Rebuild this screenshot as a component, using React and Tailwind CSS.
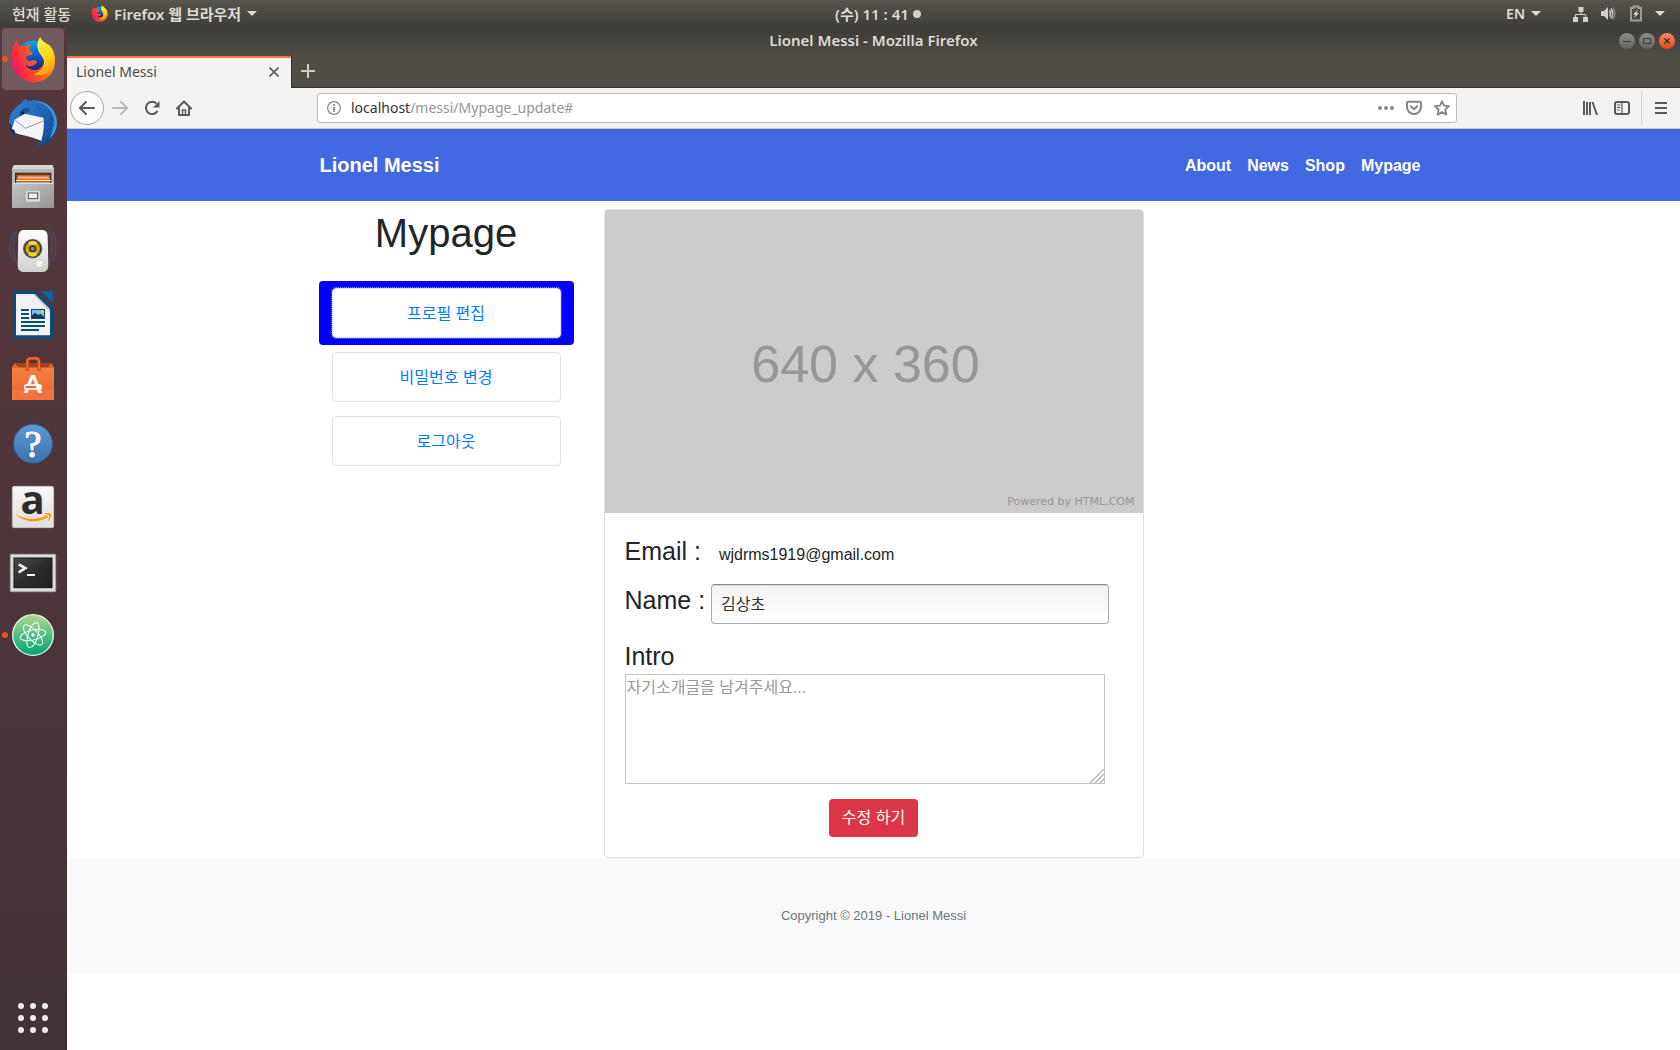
import React from "react";

const UI = "font-['Noto_Sans','Noto_Sans_CJK_KR',sans-serif]";
const WEB = "font-['Liberation_Sans','Noto_Sans_CJK_KR',sans-serif]";

function FirefoxLogo({ id, className }) {
  return (
    <svg viewBox="30 30 138 140" className={className} aria-hidden="true">
      <defs>
        <linearGradient id={id + "b"} x1="0" y1="0" x2="0.2" y2="1">
          <stop offset="0" stopColor="#00b3f5" />
          <stop offset="0.5" stopColor="#0a62d8" />
          <stop offset="1" stopColor="#2a1c78" />
        </linearGradient>
        <linearGradient id={id + "f"} x1="0" y1="0.7" x2="1" y2="0.3">
          <stop offset="0" stopColor="#e3127c" />
          <stop offset="0.22" stopColor="#ff2b3f" />
          <stop offset="0.6" stopColor="#ff6a1a" />
          <stop offset="1" stopColor="#ffb413" />
        </linearGradient>
        <linearGradient id={id + "y"} x1="0.2" y1="0" x2="0.6" y2="1">
          <stop offset="0" stopColor="#fff44a" />
          <stop offset="0.55" stopColor="#ffd91f" />
          <stop offset="1" stopColor="#ff9a12" />
        </linearGradient>
      </defs>
      <circle cx="99" cy="93" r="49" fill={"url(#" + id + "b)"} />
      <path
        d="M50 38C46 48 44 56 38 68C29 90 32 114 43 134C57 158 80 168 102 168C138 168 166 140 165 104C165 84 158 66 146 56L124 80C134 96 134 108 128 118C120 132 102 136 88 128C82 125 78 121 76 116C86 122 96 121 103 116C110 112 112 108 108 104C100 98 92 108 82 102C74 97 78 88 86 88C94 88 100 82 98 79C92 76 86 72 86 68L95 54C84 54 76 58 72 62C64 56 58 56 54 58Z"
        fill={"url(#" + id + "f)"}
      />
      <path
        d="M121 33C109 46 110 66 118 80C130 96 136 106 130 122C124 134 112 142 100 144C124 152 152 140 161 120C170 94 160 68 146 56C138 50 124 44 121 33Z"
        fill={"url(#" + id + "y)"}
      />
    </svg>
  );
}

function Thunderbird() {
  return (
    <svg viewBox="6 201 186 186" className="size-full" aria-hidden="true">
      <defs>
        <linearGradient id="tb" x1="0" y1="0" x2="1" y2="1">
          <stop offset="0" stopColor="#2f86d6" />
          <stop offset="0.5" stopColor="#1f66b8" />
          <stop offset="1" stopColor="#123a78" />
        </linearGradient>
      </defs>
      <path d="M84 222C72 224 64 230 62 236C40 248 26 274 27 296C28 306 34 318 38 322L46 334L50 324L124 344C120 352 112 358 100 363C116 364 130 360 138 354C146 354 152 348 154 342C166 330 172 312 171 292C170 258 144 228 104 226C96 226 88 228 80 230Z" fill="url(#tb)" />
      <path d="M104 228C136 234 158 256 162 284C160 304 156 320 150 340C162 330 172 310 171 292C170 258 144 228 104 228Z" fill="#3f98da" />
      <path d="M110 240L132 262L126 284L148 268L138 300L160 286M136 312L164 300M134 328L158 316" fill="none" stroke="#1a62b0" strokeWidth="5" />
      <path d="M44 284L74 266L130 278C134 300 130 326 124 347L92 336L52 326L34 314C38 304 42 294 44 284Z" fill="#f5f5f7" />
      <path d="M44 284L76 310L130 288" fill="none" stroke="#98989c" strokeWidth="3" />
      <path d="M27 294L34 300L36 312L44 316L46 334C34 324 28 312 27 294Z" fill="#162f6e" />
      <path d="M58 268C60 250 78 246 92 252C86 262 74 268 58 272Z" fill="#1c4f95" />
      <circle cx="68" cy="264" r="4" fill="#181818" />
    </svg>
  );
}

function Files() {
  return (
    <svg viewBox="6 393 186 186" className="size-full" aria-hidden="true">
      <defs>
        <linearGradient id="fl" x1="0" y1="0" x2="1" y2="1">
          <stop offset="0" stopColor="#c4c4c4" />
          <stop offset="1" stopColor="#959595" />
        </linearGradient>
      </defs>
      <path d="M42 420H157L162 432V548H36V432Z" fill="#b9b9b9" />
      <path d="M42 420H157L162 432H36Z" fill="#d6d6d6" />
      <rect x="45" y="443" width="109" height="34" fill="#38322e" />
      <rect x="50" y="449" width="100" height="24" fill="#d2581a" />
      <rect x="54" y="455" width="92" height="3" fill="#fff0d8" />
      <rect x="50" y="459" width="100" height="5" fill="#f08a35" />
      <rect x="48" y="465" width="104" height="3" fill="#fff3e2" />
      <path d="M36 474H48V472H150V474H162V549H36Z" fill="url(#fl)" />
      <path d="M38 475H160" stroke="#e4e4e4" strokeWidth="3" />
      <rect x="78" y="498" width="42" height="32" rx="4" fill="#dadada" />
      <rect x="85" y="504" width="28" height="17" fill="#eeeeee" stroke="#555" strokeWidth="3" />
    </svg>
  );
}

function Rhythmbox() {
  return (
    <svg viewBox="6 585 186 186" className="size-full" aria-hidden="true">
      <defs>
        <linearGradient id="rb" x1="0" y1="0" x2="0" y2="1">
          <stop offset="0" stopColor="#ffffff" />
          <stop offset="1" stopColor="#cfd0ce" />
        </linearGradient>
      </defs>
      <g fill="none" stroke="#4a5f92" strokeWidth="5" opacity="0.45">
        <path d="M50 618C38 640 38 690 50 716M40 622C26 644 26 688 40 710" />
        <path d="M147 618C159 640 159 690 147 716M157 622C171 644 171 688 157 710" />
      </g>
      <path d="M72 615H126Q142 615 143 632L145 722Q144 741 126 741H72Q54 741 53 722L55 632Q57 615 72 615Z" fill="url(#rb)" />
      <circle cx="98" cy="671" r="29" fill="#555753" />
      <circle cx="98" cy="671" r="25" fill="#2e3030" />
      <circle cx="98" cy="671" r="22" fill="#c9a812" />
      <path d="M98 671L84 652A24 24 0 0 1 112 652ZM98 671L84 690A24 24 0 0 0 112 690Z" fill="#ecd33f" />
      <circle cx="98" cy="671" r="11" fill="#39382e" />
      <circle cx="98" cy="671" r="6" fill="#8a8a84" />
      <circle cx="118" cy="716" r="11" fill="#fafafa" stroke="#c0c0be" strokeWidth="2" />
      <circle cx="76" cy="719" r="6" fill="none" stroke="#d4d4d2" strokeWidth="2" />
    </svg>
  );
}

function Writer() {
  return (
    <svg viewBox="6 12 186 186" className="size-full" aria-hidden="true">
      <path d="M46 33H108L159 84V170Q159 177 152 177H46Q39 177 39 170V40Q39 33 46 33Z" fill="#0b4c77" />
      <path d="M48 42H104L150 88V166H48Z" fill="#f2f2f2" />
      <path d="M104 42L150 88V96L100 44Z" fill="#c9c9c9" />
      <path d="M122 33H154Q159 33 159 38V70Z" fill="#0b639c" />
      <path d="M63 90H87M63 102H87M63 114H87M63 126H135M63 138H135M63 150H117" stroke="#0b4c77" strokeWidth="6" />
      <rect x="93" y="87" width="42" height="30" fill="#0b4c77" />
      <rect x="96" y="90" width="36" height="24" fill="#79c4e4" />
      <path d="M96 114V106L106 98L114 105L121 101L132 110V114Z" fill="#173a52" />
      <circle cx="127" cy="95" r="4" fill="#f5cf3a" />
    </svg>
  );
}

function Software() {
  return (
    <svg viewBox="6 204 186 186" className="size-full" aria-hidden="true">
      <defs>
        <linearGradient id="sw" x1="0" y1="0" x2="0" y2="1">
          <stop offset="0" stopColor="#f58146" />
          <stop offset="1" stopColor="#e8622a" />
        </linearGradient>
      </defs>
      <path d="M44 249H154L162 262H36Z" fill="#a8401a" />
      <path d="M44 249L54 262H36ZM154 249L144 262H162Z" fill="#e4622f" />
      <rect x="36" y="262" width="126" height="98" fill="url(#sw)" />
      <rect x="36" y="330" width="126" height="30" fill="#f37b45" opacity="0.7" />
      <path d="M82 272V246Q82 235 93 235H106Q117 235 117 246V272" fill="none" stroke="#b5451b" strokeWidth="10" />
      <path d="M82 270V246Q82 235 93 235H106Q117 235 117 246V270" fill="none" stroke="#ec6a36" strokeWidth="6" />
      <text x="99" y="339" textAnchor="middle" fontSize="77" fontWeight="700" fill="#fff" fontFamily="Lato, sans-serif">A</text>
      <rect x="72" y="313" width="54" height="16" rx="6" fill="#fff" />
      <rect x="76" y="318" width="32" height="6" fill="#e8622a" />
    </svg>
  );
}

function Help() {
  return (
    <svg viewBox="6 396 186 186" className="size-full overflow-visible" aria-hidden="true">
      <defs>
        <linearGradient id="hp" x1="0" y1="0" x2="0" y2="1">
          <stop offset="0" stopColor="#5d9ad2" />
          <stop offset="1" stopColor="#3b72ae" />
        </linearGradient>
      </defs>
      <circle cx="99" cy="494" r="60" fill="#2e3d58" opacity="0.6" />
      <circle cx="99" cy="491" r="58" fill="url(#hp)" stroke="#37659b" strokeWidth="3" />
      <text x="99" y="532" textAnchor="middle" fontSize="114" fill="#fff" stroke="#fff" strokeWidth="3" fontFamily="Liberation Serif, serif">?</text>
    </svg>
  );
}

function Amazon() {
  return (
    <svg viewBox="6 588 186 186" className="size-full overflow-visible" aria-hidden="true">
      <defs>
        <linearGradient id="az" x1="0" y1="0" x2="0" y2="1">
          <stop offset="0" stopColor="#f8f8f8" />
          <stop offset="1" stopColor="#dedede" />
        </linearGradient>
      </defs>
      <rect x="37" y="619" width="124" height="124" rx="5" fill="url(#az)" stroke="#c9c9c9" strokeWidth="2" />
      <text x="98" y="703" textAnchor="middle" fontSize="120" fontWeight="700" fill="#2c2c2c" fontFamily="Open Sans, sans-serif">a</text>
      <path d="M45 701C76 722 116 720 141 706L145 711C116 730 72 729 45 701Z" fill="#f90" />
      <path d="M131 702C140 698 150 698 153 701C154 708 150 718 145 724C144 718 149 710 147 706C142 703 136 704 131 702Z" fill="#f90" />
    </svg>
  );
}

function TerminalIcon() {
  return (
    <svg viewBox="6 15 186 186" className="size-full" aria-hidden="true">
      <defs>
        <linearGradient id="tm" x1="0" y1="0" x2="1" y2="1">
          <stop offset="0" stopColor="#4b4b4b" />
          <stop offset="0.5" stopColor="#2c2c2c" />
          <stop offset="1" stopColor="#202020" />
        </linearGradient>
      </defs>
      <rect x="31" y="58" width="136" height="112" rx="3" fill="#dcdcdc" stroke="#a9a9a9" strokeWidth="3" />
      <rect x="42" y="69" width="114" height="89" fill="url(#tm)" stroke="#151515" strokeWidth="3" />
      <path d="M56 88L76 99L56 112" fill="none" stroke="#f2f2f2" strokeWidth="8" />
      <path d="M81 120H105" stroke="#f2f2f2" strokeWidth="6" />
    </svg>
  );
}

function Atom() {
  return (
    <svg viewBox="6 207 186 186" className="size-full" aria-hidden="true">
      <defs>
        <linearGradient id="at" x1="0" y1="0" x2="0" y2="1">
          <stop offset="0" stopColor="#b2dc92" />
          <stop offset="0.5" stopColor="#52bd85" />
          <stop offset="1" stopColor="#00a471" />
        </linearGradient>
      </defs>
      <circle cx="99" cy="300" r="61" fill="url(#at)" stroke="#eaf6ee" strokeWidth="4" />
      <g fill="none" stroke="#fff" strokeWidth="3">
        <ellipse cx="99" cy="300" rx="39" ry="15" transform="rotate(-13 99 300)" />
        <ellipse cx="99" cy="300" rx="39" ry="15" transform="rotate(47 99 300)" />
        <ellipse cx="99" cy="300" rx="39" ry="15" transform="rotate(107 99 300)" />
      </g>
      <circle cx="99" cy="300" r="5" fill="#fff" />
    </svg>
  );
}

const dockApps = [
  { name: "Firefox", icon: <FirefoxLogo id="dock" className="h-[47px] w-[46px]" />, active: true, running: true },
  { name: "Thunderbird", icon: <Thunderbird /> },
  { name: "Files", icon: <Files /> },
  { name: "Rhythmbox", icon: <Rhythmbox /> },
  { name: "LibreOffice Writer", icon: <Writer /> },
  { name: "Ubuntu Software", icon: <Software /> },
  { name: "Help", icon: <Help /> },
  { name: "Amazon", icon: <Amazon /> },
  { name: "Terminal", icon: <TerminalIcon /> },
  { name: "Atom", icon: <Atom />, running: true },
];

function Caret() {
  return (
    <svg viewBox="0 0 10 6" className="h-[6px] w-[10px]" fill="currentColor" aria-hidden="true">
      <path d="M0 0H10L5 5Z" />
    </svg>
  );
}

function TopBar() {
  return (
    <header className={"grid h-[27px] shrink-0 grid-cols-[11fr_auto_10fr] items-center bg-linear-to-b from-[#58554e] to-[#3e3d39] text-[15px] leading-5 font-semibold text-[#dfdbd2] " + UI}>
      <div className="flex items-center pl-3">
        <button type="button" className="mr-5 whitespace-nowrap font-medium">현재 활동</button>
        <button type="button" className="flex items-center gap-1.5 whitespace-nowrap">
          <FirefoxLogo id="bar" className="size-[17px]" />
          <span>Firefox 웹 브라우저</span>
          <Caret />
        </button>
      </div>
      <button type="button" className="flex items-center gap-1 whitespace-nowrap">
        <span>(수) 11 : 41</span>
        <span className="size-2 rounded-full bg-[#d3d0ca]" />
      </button>
      <div className="flex items-center justify-end pr-[15px]">
        <button type="button" className="mr-8 flex items-center gap-1.5 text-sm">EN <Caret /></button>
        <button type="button" aria-label="System menu" className="flex items-center gap-3">
          <svg viewBox="0 0 16 16" className="size-4" aria-hidden="true">
            <path d="M5.500 1H10.500V6H5.500ZM0 11H5V16H0ZM10 11H15V16H10Z" fill="#d3d0ca" />
            <path d="M8 6V8.500M2.500 11V8.500H12.500V11" fill="none" stroke="#d3d0ca" />
          </svg>
          <svg viewBox="0 0 16 16" className="size-4" aria-hidden="true">
            <path d="M0 5H3L7 1V14L3 10H0Z" fill="#d3d0ca" />
            <path d="M8.500 4.500Q10.500 7.500 8.500 10.500M10 2.500Q13.500 7.500 10 12.500" fill="none" stroke="#d3d0ca" strokeWidth="1.500" />
            <path d="M12 1.500Q16 7.500 12 13.500" fill="none" stroke="#84817a" strokeWidth="1.500" />
          </svg>
          <svg viewBox="0 0 14 17" className="h-[17px] w-[14px]" aria-hidden="true">
            <path d="M4.500 1.500H9.500V3H12V15.500H2V3H4.500Z" fill="none" stroke="#a09d96" strokeWidth="2" />
            <path d="M9 4.500L4 9.500H6.500L5 13L10 8H7.500Z" fill="#e8e5df" />
          </svg>
          <Caret />
        </button>
      </div>
    </header>
  );
}

function Dock() {
  return (
    <aside className="flex w-[67px] shrink-0 flex-col items-center bg-linear-to-b from-[#54373b] via-[#4d353a] to-[#403236] pt-px">
      <nav aria-label="Dock" className="flex w-full flex-col gap-0.5">
        {dockApps.map((app) => (
          <div key={app.name} className="relative pl-0.5">
            <button
              type="button"
              aria-label={app.name}
              className={app.active ? "flex size-[62px] items-center justify-center rounded-sm bg-[#715a5e]" : "flex size-[62px] items-center justify-center"}
            >
              {app.icon}
            </button>
            {app.running && <span className="absolute top-7 left-0.5 size-1.5 rounded-full bg-[#e95420]" />}
          </div>
        ))}
      </nav>
      <button type="button" aria-label="Show applications" className="mt-auto mr-px mb-[17px] grid grid-cols-3 gap-1.5">
        {Array.from({ length: 9 }, (_, i) => (
          <span key={i} className="size-1.5 rounded-full bg-[#eeeeec]" />
        ))}
      </button>
    </aside>
  );
}

function TitleBar() {
  return (
    <div className="grid h-7 grid-cols-[1fr_auto_1fr] items-center bg-linear-to-b from-[#3b3a36] to-[#504d46] text-[#dfdbd2]">
      <span />
      <h1 className="pb-0.5 text-[15px] leading-5 font-semibold">Lionel Messi - Mozilla Firefox</h1>
      <div className="flex justify-end gap-1 pr-[5px]">
        <button type="button" aria-label="Minimize" className="flex size-4 items-center justify-center rounded-full bg-linear-to-b from-[#8e8c86] to-[#65635d]">
          <span className="h-px w-2 bg-[#3c3b37]" />
        </button>
        <button type="button" aria-label="Maximize" className="flex size-4 items-center justify-center rounded-full bg-linear-to-b from-[#8e8c86] to-[#65635d]">
          <span className="h-1.5 w-2 border border-[#3c3b37]" />
        </button>
        <button type="button" aria-label="Close" className="flex size-4 items-center justify-center rounded-full bg-linear-to-b from-[#f58660] to-[#df4a16]">
          <svg viewBox="0 0 6 6" className="size-1.5" aria-hidden="true">
            <path d="M0.500 0.500L5.500 5.500M5.500 0.500L0.500 5.500" stroke="#3c2a20" strokeWidth="1.300" />
          </svg>
        </button>
      </div>
    </div>
  );
}

function TabStrip() {
  return (
    <div className="flex h-[33px] items-stretch bg-[#504d46]">
      <div className="mt-px flex w-56 items-center border-t-2 border-[#f07746] bg-[#f4f3f2] pr-2.5 pb-0.5 pl-[9px]">
        <button type="button" className="flex-1 text-left text-sm leading-5 text-[#4c4c4c]">Lionel Messi</button>
        <button type="button" aria-label="Close tab" className="p-0.5">
          <svg viewBox="0 0 10 10" className="size-2.5" aria-hidden="true">
            <path d="M0.500 0.500L9.500 9.500M9.500 0.500L0.500 9.500" stroke="#5c5c5c" strokeWidth="1.700" />
          </svg>
        </button>
      </div>
      <div className="flex flex-1 items-center border-b border-l border-[#33322e] pl-[9px]">
        <button type="button" aria-label="New tab">
          <svg viewBox="0 0 14 14" className="size-3.5" aria-hidden="true">
            <path d="M7 0V14M0 7H14" stroke="#d0cdc6" strokeWidth="2" />
          </svg>
        </button>
      </div>
    </div>
  );
}

function ToolButton({ label, children, className = "" }) {
  return (
    <button type="button" aria-label={label} className={"flex size-8 items-center justify-center " + className}>
      {children}
    </button>
  );
}

function Toolbar() {
  return (
    <div className="flex h-[41px] items-center border-b border-[#c8c4bd] bg-[#f4f3f2] text-[#5a5a5a]">
      <button type="button" aria-label="Back" className="ml-[3px] flex size-[34px] items-center justify-center rounded-full border border-[#a8a7a5] bg-[#fcfcfc]">
        <svg viewBox="0 0 16 16" className="size-4" fill="none" stroke="currentColor" strokeWidth="2" strokeLinecap="round" strokeLinejoin="round" aria-hidden="true">
          <path d="M7 2L1 8L7 14M1.500 8H15" />
        </svg>
      </button>
      <ToolButton label="Forward" className="text-[#b9b8b6]">
        <svg viewBox="0 0 16 16" className="size-4" fill="none" stroke="currentColor" strokeWidth="2" strokeLinecap="round" strokeLinejoin="round" aria-hidden="true">
          <path d="M9 2L15 8L9 14M14.500 8H1" />
        </svg>
      </ToolButton>
      <ToolButton label="Reload">
        <svg viewBox="0 0 16 16" className="size-4" fill="none" stroke="currentColor" strokeWidth="2" aria-hidden="true">
          <path d="M13.500 11A6.200 6.200 0 1 1 12.500 3.500" />
          <path d="M15.500 1V7.500H9Z" fill="currentColor" stroke="none" />
        </svg>
      </ToolButton>
      <ToolButton label="Home">
        <svg viewBox="0 0 16 16" className="size-4" fill="none" stroke="currentColor" strokeWidth="2" strokeLinecap="round" strokeLinejoin="round" aria-hidden="true">
          <path d="M1 8.500L8 1.500L15 8.500M3 8V15H13V8" />
          <path d="M6.500 15V10H9.500V15" strokeWidth="1.500" />
        </svg>
      </ToolButton>
      <div className="w-[117px] shrink" />
      <div className="flex h-[30px] min-w-0 flex-1 items-center rounded-[3px] border border-[#bcb9b5] bg-white pr-1.5 text-[#858585]">
        <button type="button" aria-label="Site information" className="pr-2.5 pl-[9px]">
          <svg viewBox="0 0 14 14" className="size-3.5" fill="none" stroke="currentColor" aria-hidden="true">
            <circle cx="7" cy="7" r="6.400" strokeWidth="1.200" />
            <path d="M7 6V11M7 3V5" strokeWidth="1.700" />
          </svg>
        </button>
        <div className="relative min-w-0 flex-1 text-sm leading-5">
          <input aria-label="Address" defaultValue="localhost/messi/Mypage_update#" className="w-full bg-transparent text-transparent caret-black outline-none" />
          <span aria-hidden="true" className="pointer-events-none absolute inset-0 text-[#969696]">
            <span className="text-[#333]">localhost</span>/messi/Mypage_update#
          </span>
        </div>
        <div className="flex items-center gap-3">
          <button type="button" aria-label="Page actions">
            <svg viewBox="0 0 16 16" className="size-4" fill="currentColor" aria-hidden="true">
              <circle cx="2" cy="8" r="2" />
              <circle cx="8" cy="8" r="2" />
              <circle cx="14" cy="8" r="2" />
            </svg>
          </button>
          <button type="button" aria-label="Save to Pocket">
            <svg viewBox="0 0 16 16" className="size-4" fill="none" stroke="currentColor" strokeWidth="2" strokeLinecap="round" strokeLinejoin="round" aria-hidden="true">
              <path d="M2 1.800H14Q15 1.800 15 2.800V7A7 7 0 0 1 1 7V2.800Q1 1.800 2 1.800Z" />
              <path d="M4.800 6.200L8 9.300L11.200 6.200" />
            </svg>
          </button>
          <button type="button" aria-label="Bookmark">
            <svg viewBox="0 0 16 16" className="size-4" fill="none" stroke="currentColor" strokeWidth="1.800" strokeLinejoin="round" aria-hidden="true">
              <path d="M8 1.200L10 5.700L15 6.200L11.300 9.500L12.400 14.700L8 12L3.600 14.700L4.700 9.500L1 6.200L6 5.700Z" />
            </svg>
          </button>
        </div>
      </div>
      <div className="w-[117px] shrink" />
      <ToolButton label="Library">
        <svg viewBox="0 0 16 16" className="size-4" fill="none" stroke="currentColor" strokeWidth="2" aria-hidden="true">
          <path d="M2 1V15M5 2V15M8 2V15M10.500 2L15 15" />
        </svg>
      </ToolButton>
      <ToolButton label="Sidebars">
        <svg viewBox="0 0 16 16" className="size-4" fill="none" stroke="currentColor" aria-hidden="true">
          <rect x="1" y="2" width="14" height="12" rx="2" strokeWidth="2" />
          <path d="M8 2V14M3 5H6.500M3 7.500H6.500M3 10H5.500" strokeWidth="1.200" />
        </svg>
      </ToolButton>
      <span className="ml-[3px] h-[34px] w-px bg-[#d6d4d1]" />
      <ToolButton label="Menu" className="mr-[3px] ml-[3px]">
        <svg viewBox="0 0 12 12" className="size-3" stroke="currentColor" strokeWidth="2" strokeLinecap="square" aria-hidden="true">
          <path d="M1 1H11M1 6H11M1 11H11" />
        </svg>
      </ToolButton>
    </div>
  );
}

function SiteNav() {
  return (
    <nav className="bg-[#4169e1] font-bold text-white">
      <div className="mx-auto flex h-[72px] max-w-[1140px] items-center justify-between pr-[15px] pl-4">
        <a href="#home" className="text-xl leading-8">Lionel Messi</a>
        <ul className="flex gap-4 pt-0.5 pr-2 text-base leading-6">
          {["About", "News", "Shop", "Mypage"].map((item) => (
            <li key={item}><a href={"#" + item.toLowerCase()}>{item}</a></li>
          ))}
        </ul>
      </div>
    </nav>
  );
}

function SideMenu() {
  return (
    <div className="w-1/4 px-[15px] text-center">
      <h2 className="text-[40px] leading-[48px]">Mypage</h2>
      <ul className="mt-6">
        {["프로필 편집", "비밀번호 변경", "로그아웃"].map((item, i) => (
          <li key={item} className={i === 0 ? "rounded bg-[#0000ff] px-[13px] py-[7px]" : "px-[13px] py-[7px]"}>
            <a
              href={"#menu-" + i}
              className={
                i === 0
                  ? "block rounded border border-[#dee2e6] bg-white pt-[13px] pb-[11px] leading-6 text-[#007bff] outline-1 outline-[#5b8cff] outline-dotted"
                  : "block rounded border border-[#dee2e6] bg-white pt-[13px] pb-[11px] leading-6 text-[#007bff]"
              }
            >
              {item}
            </a>
          </li>
        ))}
      </ul>
    </div>
  );
}

function ProfileCard() {
  return (
    <div className="w-1/2 px-[15px]">
      <div className="overflow-hidden rounded border border-[#dfdfdf] bg-white">
        <div role="img" aria-label="640 x 360" className="grid aspect-[538/303] grid-rows-[1fr_auto_1fr] bg-[#cccccc] text-[#969696]">
          <span />
          <span className="pt-1 pr-4 text-center font-['Liberation_Sans',sans-serif] text-[52px] leading-[64px]">640 x 360</span>
          <span className="self-end pr-2 pb-[3px] text-right font-['DejaVu_Sans',sans-serif] text-[11px] leading-4">Powered by HTML.COM</span>
        </div>
        <form className="px-5 pt-6 pb-5" onSubmit={(e) => e.preventDefault()}>
          <div className="flex items-baseline gap-[18px]">
            <h3 className="text-[25px] leading-7">Email :</h3>
            <span>wjdrms1919@gmail.com</span>
          </div>
          <div className="mt-[17px] flex items-start gap-1.5">
            <label htmlFor="name" className="pt-0.5 text-[25px] leading-7">Name :</label>
            <input
              id="name"
              defaultValue="김상초"
              className="mr-[14px] h-10 min-w-0 flex-1 rounded border border-[#aaa] border-t-[#8a8a8a] bg-linear-to-b from-[#f2f2f2] to-white px-[9px] pb-0.5 text-[#333] shadow-[inset_0_1px_0_#d8d8d8]"
            />
          </div>
          <label htmlFor="intro" className="mt-[18px] block text-[25px] leading-7">Intro</label>
          <div className="relative mt-1 mr-[18px]">
            <textarea
              id="intro"
              placeholder="자기소개글을 남겨주세요..."
              className="block h-[110px] w-full resize-none border border-[#c4c4c0] px-px pt-px leading-6 placeholder:text-[#999]"
            />
            <svg viewBox="0 0 14 14" className="absolute right-px bottom-px size-3.5" stroke="#a9a9a9" strokeWidth="1.200" aria-hidden="true">
              <path d="M0 14L14 0M5 14L14 5M10 14L14 10" />
            </svg>
          </div>
          <button type="submit" className="mx-auto mt-[15px] block rounded bg-[#dc3545] px-[13px] py-[7px] leading-6 text-white">수정 하기</button>
        </form>
      </div>
    </div>
  );
}

export default function App() {
  return (
    <div className="flex min-h-screen flex-col bg-white">
      <TopBar />
      <div className="flex flex-1">
        <Dock />
        <main className="min-w-0 flex-1">
          <div className={UI}>
            <TitleBar />
            <TabStrip />
            <Toolbar />
          </div>
          <div className={"text-base text-[#212529] " + WEB}>
            <SiteNav />
            <section className="mx-auto flex max-w-[1140px] items-start pt-2">
              <SideMenu />
              <ProfileCard />
            </section>
            <footer className="bg-[#f8f9fa] py-12 text-center text-[13px] leading-[19px] text-[#6c757d]">
              Copyright © 2019 - Lionel Messi
            </footer>
          </div>
        </main>
      </div>
    </div>
  );
}
